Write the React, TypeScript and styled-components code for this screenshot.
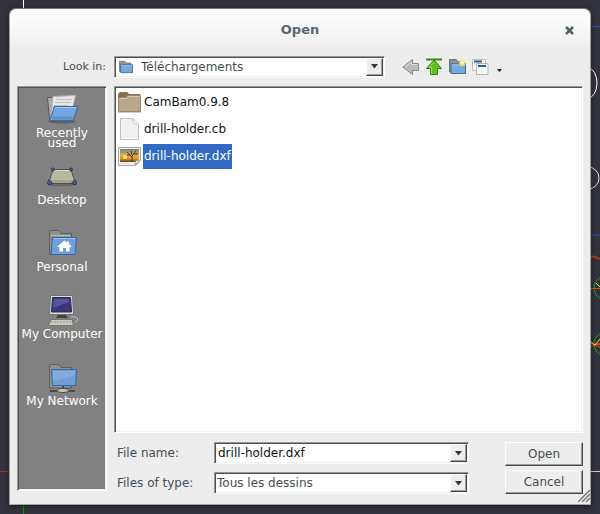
import React, { useState } from "react";
import styled, { createGlobalStyle, css } from "styled-components";

const GlobalStyle = createGlobalStyle`
  * { box-sizing: border-box; }
  html, body, #root { height: 100%; }
  body {
    margin: 0;
    background: #32323d;
    font: 12px/14px "DejaVu Sans", sans-serif;
    color: #464e50;
  }
  button, input, select { font: inherit; color: inherit; margin: 0; }
`;

const sunken = css`
  border: 1px solid;
  border-color: #979797 #ffffff #ffffff #979797;
  box-shadow: inset 1px 1px 0 #505050, inset -1px -1px 0 #f1f1f1;
  padding: 1px;
`;

const raised = css`
  border: 1px solid;
  border-color: #ffffff #484848 #484848 #ffffff;
  box-shadow: inset -1px -1px 0 #9a9a9a;
  background: #ededed;
`;

const Workspace = styled.main`
  position: relative;
  display: flex;
  min-height: 100%;
  padding: 8px 9px 9px;
  overflow: hidden;
`;

const Canvas = styled.svg<{ $side: "left" | "right" }>`
  position: absolute;
  top: 0;
  ${(p) => p.$side}: 0;
`;

const Dialog = styled.section`
  position: relative;
  flex: 1;
  min-width: 0;
  display: flex;
  flex-direction: column;
  padding: 0 7px 10px;
  border: 1px solid #a5a5a5;
  border-top-color: #77777c;
  border-radius: 7px 7px 0 0;
  background: linear-gradient(#ffffff, #ededed 42px);
  box-shadow: 0 1px 4px rgba(0, 0, 0, 0.5);
`;

const TitleBar = styled.header`
  display: grid;
  grid-template-columns: 28px 1fr 28px;
  align-items: center;
  height: 42px;
`;

const Title = styled.h1`
  grid-column: 2;
  margin: 0;
  text-align: center;
  font: bold 13px/16px "DejaVu Sans", sans-serif;
  color: #566a70;
`;

const CloseButton = styled.button`
  display: grid;
  place-items: center;
  height: 20px;
  padding: 0;
  border: 0;
  background: none;
`;

const LookRow = styled.div`
  display: flex;
  align-items: center;
  height: 35px;
  padding-bottom: 4px;
`;

const LookLabel = styled.label`
  width: 97px;
  padding-right: 8px;
  text-align: right;
  font-size: 11px;
`;

const Combo = styled.div<{ $wide?: boolean }>`
  ${sunken}
  position: relative;
  display: flex;
  align-items: center;
  height: 22px;
  background: #fff;
  ${(p) => p.$wide && css`flex: 0 1 271px; min-width: 0;`}
`;

const ComboIcon = styled.span`
  position: absolute;
  left: 4px;
  top: 3px;
  pointer-events: none;
`;

const Select = styled.select<{ $indent?: boolean }>`
  appearance: none;
  flex: 1;
  min-width: 0;
  height: 16px;
  padding: 0 18px 0 ${(p) => (p.$indent ? 25 : 1)}px;
  border: 0;
  outline: 0;
  background: transparent;
  line-height: 16px;
`;

const NameInput = styled.input`
  flex: 1;
  min-width: 0;
  height: 16px;
  padding: 0 2px;
  border: 0;
  outline: 0;
  background: transparent;
  color: #111;
`;

const arrowBox = css`
  ${raised}
  display: grid;
  place-items: center;
  width: 17px;
  height: 18px;
  padding: 0;
`;

const ArrowFace = styled.span`
  ${arrowBox}
  position: absolute;
  right: 1px;
  top: 1px;
  pointer-events: none;
`;

const ArrowButton = styled.button`
  ${arrowBox}
`;

const Tools = styled.div`
  display: flex;
  align-items: center;
  gap: 3px;
  margin-left: 16px;
`;

const ToolButton = styled.button<{ $narrow?: boolean }>`
  display: grid;
  place-items: ${(p) => (p.$narrow ? "end center" : "center")};
  width: ${(p) => (p.$narrow ? 13 : 20)}px;
  height: 20px;
  padding: 0 0 ${(p) => (p.$narrow ? 5 : 0)}px;
  border: 0;
  background: none;
`;

const Body = styled.div`
  flex: 1;
  display: grid;
  grid-template-columns: 90px 1fr;
  gap: 7px;
`;

const Places = styled.nav`
  ${sunken}
  margin-bottom: 3px;
  padding-top: 7px;
  background: #818181;
`;

const Place = styled.button`
  display: flex;
  flex-direction: column;
  align-items: center;
  gap: 2px;
  width: 100%;
  height: 67px;
  padding: 0;
  border: 0;
  background: none;
  color: #fff;
  line-height: 10px;
  white-space: pre;
`;

const Main = styled.div`
  display: flex;
  flex-direction: column;
  min-width: 0;
`;

const Files = styled.ul`
  ${sunken}
  flex: 1;
  margin: 0;
  padding: 2px;
  list-style: none;
  background: #fff;
`;

const FileRow = styled.button`
  display: flex;
  align-items: center;
  gap: 1px;
  height: 27px;
  padding: 0;
  border: 0;
  background: none;
  color: #111;
`;

const FileName = styled.span<{ $selected: boolean }>`
  height: 25px;
  padding: 0 1px;
  line-height: 25px;
  ${(p) => p.$selected && css`background: #316ac5; color: #fff;`}
`;

const Form = styled.form`
  display: grid;
  grid-template-columns: minmax(0, 352px) 78px;
  justify-content: space-between;
  padding: 9px 0 0 3px;
`;

const Fields = styled.div`
  display: grid;
  grid-template-columns: 97px minmax(0, 1fr);
  row-gap: 8px;
  align-items: center;
`;

const Actions = styled.div`
  display: flex;
  flex-direction: column;
  gap: 4px;
`;

const Action = styled.button`
  ${raised}
  height: 24px;
  padding: 0;
`;

const Grip = styled.svg`
  position: absolute;
  right: 0;
  bottom: 1px;
`;

const Triangle = () => (
  <svg width="9" height="5" aria-hidden="true">
    <path d="M1 0H8L4.500 4.500Z" fill="#30383a" />
  </svg>
);

const SmallFolder = ({ spark = false, size = 16 }: { spark?: boolean; size?: number }) => (
  <svg width={size} height={size} viewBox="0 0 16 16" aria-hidden="true" display="block">
    <path d="M.5 13V1.500H6.500L8 3.500H13.500V13Z" fill="#969691" stroke="#767671" />
    <path d="M1.500 5.500H15.500V14.500H2Z" fill="#79a8da" stroke="#416da6" />
    <path d="M2.500 6.500H14.500" stroke="#a6c6e8" />
    {spark && (
      <g>
        <circle cx="12.500" cy="4.500" r="3.200" fill="#f3e56b" opacity=".8" />
        <circle cx="12.500" cy="4.500" r="1.600" fill="#fffce0" />
      </g>
    )}
  </svg>
);

const RecentIcon = () => (
  <svg width="32" height="32" aria-hidden="true">
    <ellipse cx="16" cy="27.500" rx="14" ry="2" fill="#606060" />
    <path d="M1.500 3.500H8V25H3.500Z" fill="#aaa" stroke="#5d5d5d" />
    <path d="M7 2.500L29.500 1.500L25 20L5 25Z" fill="#e8e8e8" stroke="#b4b4b4" />
    <path d="M10 5.500H26M9 8.500H25M8 11.500H22" stroke="#bcbcbc" />
    <path d="M8 12.500H32L27 26.500H4L7 17Z" fill="#75a5dc" stroke="#3869a8" />
    <path d="M9 13.500H30" stroke="#a7c8ec" />
    <path d="M7 24H26.500" stroke="#5b8fce" strokeWidth="3" />
  </svg>
);

const DesktopIcon = () => (
  <svg width="32" height="32" aria-hidden="true">
    <ellipse cx="16" cy="24" rx="14" ry="1.500" fill="#696969" />
    <path d="M7 8.500H25L29.500 22.500H2.500Z" fill="#b8b8a1" stroke="#4e4e46" />
    <path d="M8 9.500H24" stroke="#dadac7" />
    <path d="M5 19H27L28 22H4Z" fill="#a3a38d" />
    <g fill="#435a87" stroke="#293b60">
      <circle cx="7" cy="8.500" r="1.500" />
      <circle cx="25" cy="8.500" r="1.500" />
      <path d="M1.500 21.500L3 18.500L6 21.500L5 23.500H2ZM30.500 21.500L29 18.500L26 21.500L27 23.500H30Z" />
    </g>
  </svg>
);

const FolderBack = () => (
  <g>
    <path d="M3.500 26V3.500L5 2.500H13L15 5.500H25.500V26Z" fill="#909090" stroke="#5e5e5e" />
    <path d="M5 7.500H24" stroke="#bbb" />
  </g>
);

const HomeIcon = () => (
  <svg width="32" height="32" aria-hidden="true">
    <FolderBack />
    <path d="M6.500 9.500H30.500L29 26.500H5Z" fill="#6f9fd6" stroke="#3468aa" />
    <path d="M8 10.500H29" stroke="#9ec1e8" />
    <path d="M11 19L18.500 12.500L21 14.500V13.500H23V16L26 19H23.500V23.500H20V20H17V23.500H13.500V19Z" fill="#fff" />
  </svg>
);

const ComputerIcon = () => (
  <svg width="32" height="32" aria-hidden="true">
    <path d="M4.500 .5H26.500L27.500 19.500H3.500Z" fill="#deded8" stroke="#73736c" />
    <path d="M6.500 2.500H24.500L25.500 17H5.500Z" fill="#393779" stroke="#28265c" />
    <path d="M8 4H23V7L7 13Z" fill="#6765a1" opacity=".65" />
    <path d="M12 20H20L22 23H10Z" fill="#44443f" />
    <path d="M5 24.500H26L27.500 30.500H2.500Z" fill="#cbcbc3" stroke="#777770" />
    <path d="M5 27H25" stroke="#8e8e87" strokeDasharray="2 1" />
    <path d="M25 22C32 21 34 25 29 27" fill="none" stroke="#c9c9c2" />
  </svg>
);

const NetworkIcon = () => (
  <svg width="32" height="32" aria-hidden="true">
    <FolderBack />
    <path d="M5.500 7.500H30.500L29.500 23.500H6.500Z" fill="#719fd4" stroke="#3668a8" />
    <path d="M7 9H29L28 14L7 19Z" fill="#89b1df" opacity=".7" />
    <path d="M17 24V27M4 29H29" stroke="#4c4c4c" strokeWidth="2" />
    <ellipse cx="17" cy="28.500" rx="6" ry="2" fill="#c5c5c0" stroke="#4c4c4c" />
  </svg>
);

const BeigeFolder = () => (
  <svg width="25" height="24" aria-hidden="true">
    <path d="M1 20V3L3 1H10L12 3H23V20Z" fill="#87704d" />
    <path d="M1.500 6.500H9L11 4.500H23.500V20.500H1.500Z" fill="#b9a78c" stroke="#9c8767" />
    <path d="M2.500 7.500H9.500L11.500 5.500H22.500" fill="none" stroke="#d8c9b2" />
    <path d="M1 21.500H24" stroke="#d2cabd" />
  </svg>
);

const PageIcon = () => (
  <svg width="25" height="24" aria-hidden="true">
    <path d="M3.500 .5H16L21.500 6V21.500H3.500Z" fill="#f0f0ee" stroke="#c2c2be" />
    <path d="M15.500 1C17 5 16 6 21 6.500" fill="#fff" stroke="#c0c0bc" />
    <path d="M5 20.500H20" stroke="#fff" />
  </svg>
);

const SunsetIcon = () => (
  <svg width="25" height="24" aria-hidden="true">
    <defs>
      <linearGradient id="sunset" x2="0" y2="1">
        <stop stopColor="#788184" />
        <stop offset=".45" stopColor="#d6ac52" />
        <stop offset=".75" stopColor="#e89424" />
        <stop offset="1" stopColor="#58401d" />
      </linearGradient>
    </defs>
    <path d="M1.500 2.500H23.500V15L19 20.500H1.500Z" fill="#eee" stroke="#aaa" />
    <path d="M3 4H22V14L19 17H3Z" fill="url(#sunset)" />
    <circle cx="8" cy="12" r="2" fill="#ffe36b" />
    <path d="M15 17V11M15 12L10 7M15 11L19 6M13 10H10M17 9L21 9M15 10L14 6" stroke="#49391e" fill="none" />
    <path d="M18 20L19 16L23 15Z" fill="#fff" stroke="#aaa" />
  </svg>
);

const BackIcon = () => (
  <svg width="18" height="18" aria-hidden="true">
    <path d="M.8 9L10.500 1.500V5.500H16.500V12.500H10.500V16.500Z" fill="#bcbcb9" stroke="#888885" />
    <path d="M3 9L9.500 4V6.500H15.500" fill="none" stroke="#dedede" />
  </svg>
);

const UpIcon = () => (
  <svg width="18" height="18" aria-hidden="true">
    <path d="M1 1.500H17" stroke="#3b850c" strokeWidth="2" />
    <path d="M9 2L16.500 10.500H12.500V16.500H5.500V10.500H1.500Z" fill="#65bf20" stroke="#397f0b" />
    <path d="M9 4L4 9.500H6.500V15.500" fill="none" stroke="#a0df64" />
  </svg>
);

const ViewIcon = () => (
  <svg width="18" height="18" aria-hidden="true">
    <path d="M1.500 1.500H14.500V12.500H1.500Z" fill="#f7f7f5" stroke="#bebebb" />
    <path d="M3 3.500H11" stroke="#285b9e" strokeWidth="2" />
    <path d="M5.500 5.500H17V16.500H5.500Z" fill="#f7f7f5" stroke="#b5b5b2" />
    <path d="M7 8H15" stroke="#285b9e" strokeWidth="2" />
  </svg>
);

const places = [
  { label: "Recently\nused", icon: <RecentIcon /> },
  { label: "Desktop", icon: <DesktopIcon /> },
  { label: "Personal", icon: <HomeIcon /> },
  { label: "My Computer", icon: <ComputerIcon /> },
  { label: "My Network", icon: <NetworkIcon /> },
];

const files = [
  { name: "CamBam0.9.8", icon: <BeigeFolder /> },
  { name: "drill-holder.cb", icon: <PageIcon /> },
  { name: "drill-holder.dxf", icon: <SunsetIcon /> },
];

export default function App() {
  const [fileName, setFileName] = useState("drill-holder.dxf");
  return (
    <Workspace>
      <GlobalStyle />
      <Canvas $side="left" width="40" height="514" aria-hidden="true">
        <path d="M23.500 0V9" stroke="#fff" />
        <path d="M23.500 503V514" stroke="#0a930f" />
        <path d="M0 471.500H12" stroke="#cf151b" />
      </Canvas>
      <Canvas $side="right" width="30" height="514" fill="none" aria-hidden="true">
        <path d="M20 26.500H30M20 235H30" stroke="#244bb8" />
        <path d="M20 471.500H30" stroke="#ccc" />
        <ellipse cx="18" cy="83" rx="9" ry="15" stroke="#fff" />
        <circle cx="18" cy="178" r="11" stroke="#ddd" />
        <path d="M20 256L25 257L30 259" stroke="#ad3c19" strokeWidth="2" />
        <g stroke="#10a916">
          <circle cx="36" cy="288" r="12" />
          <circle cx="36" cy="344" r="12" />
        </g>
        <path d="M20 288.500H30M20 343L30 347M20 347L30 343M24 344.500H30" stroke="#f04316" />
        <path d="M26 283L30 287M20 341L25 345L30 339" stroke="#e9e622" />
      </Canvas>

      <Dialog role="dialog" aria-labelledby="dialog-title">
        <TitleBar>
          <Title id="dialog-title">Open</Title>
          <CloseButton type="button" aria-label="Close">
            <svg width="9" height="9" aria-hidden="true">
              <path d="M1 1L8 8M8 1L1 8" stroke="#526469" strokeWidth="2.500" />
            </svg>
          </CloseButton>
        </TitleBar>

        <LookRow>
          <LookLabel htmlFor="look-in">Look in:</LookLabel>
          <Combo $wide>
            <ComboIcon><SmallFolder size={14} /></ComboIcon>
            <Select id="look-in" $indent><option>Téléchargements</option></Select>
            <ArrowFace><Triangle /></ArrowFace>
          </Combo>
          <Tools>
            <ToolButton type="button" aria-label="Back"><BackIcon /></ToolButton>
            <ToolButton type="button" aria-label="Up one level"><UpIcon /></ToolButton>
            <ToolButton type="button" aria-label="New folder"><SmallFolder spark size={17} /></ToolButton>
            <ToolButton type="button" aria-label="View"><ViewIcon /></ToolButton>
            <ToolButton type="button" aria-label="View options" $narrow>
              <svg width="5" height="3" viewBox="0 0 5 3" aria-hidden="true"><path d="M0 0H5L2.500 3Z" fill="#222" /></svg>
            </ToolButton>
          </Tools>
        </LookRow>

        <Body>
          <Places aria-label="Places">
            {places.map((p) => (
              <Place type="button" key={p.label}>{p.icon}<span>{p.label}</span></Place>
            ))}
          </Places>
          <Main>
            <Files aria-label="Files">
              {files.map((f) => (
                <li key={f.name}>
                  <FileRow type="button" onClick={() => setFileName(f.name)}>
                    {f.icon}
                    <FileName $selected={f.name === fileName}>{f.name}</FileName>
                  </FileRow>
                </li>
              ))}
            </Files>
            <Form onSubmit={(e) => e.preventDefault()}>
              <Fields>
                <label htmlFor="file-name">File name:</label>
                <Combo>
                  <NameInput id="file-name" value={fileName} onChange={(e) => setFileName(e.target.value)} />
                  <ArrowButton type="button" aria-label="Recent names"><Triangle /></ArrowButton>
                </Combo>
                <label htmlFor="file-type">Files of type:</label>
                <Combo>
                  <Select id="file-type"><option>Tous les dessins</option></Select>
                  <ArrowFace><Triangle /></ArrowFace>
                </Combo>
              </Fields>
              <Actions>
                <Action type="submit">Open</Action>
                <Action type="button">Cancel</Action>
              </Actions>
            </Form>
          </Main>
        </Body>
        <Grip width="12" height="13" aria-hidden="true">
          <path d="M0 12L12 0M4 12L12 4M8 12L12 8" stroke="#777" strokeWidth="1.500" />
        </Grip>
      </Dialog>
    </Workspace>
  );
}
